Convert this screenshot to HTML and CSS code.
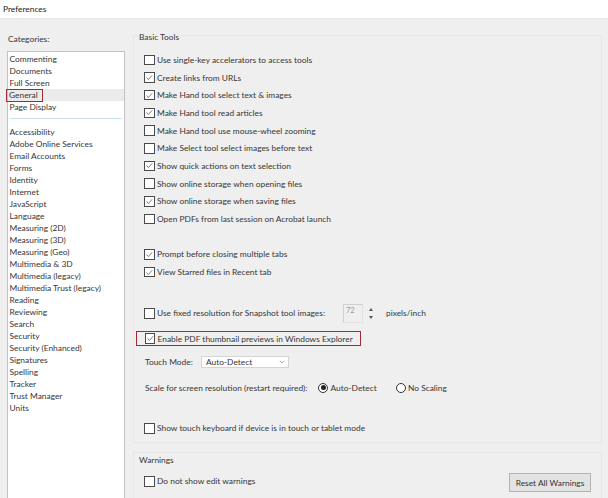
FILE: index.html
```html
<!DOCTYPE html>
<html>
<head>
<meta charset="utf-8">
<link rel="stylesheet" href="styles.css">
</head>
<body>
<div class="titlebar">Preferences</div>
<div class="main">
  <div class="sidebar">
    <div class="cat-label">Categories:</div>
    <div class="listbox">
      <div class="item">Commenting</div>
      <div class="item">Documents</div>
      <div class="item">Full Screen</div>
      <div class="item selected"><span class="mark">General</span></div>
      <div class="item">Page Display</div>
      <div class="sep"></div>
      <div class="item">Accessibility</div>
      <div class="item">Adobe Online Services</div>
      <div class="item">Email Accounts</div>
      <div class="item">Forms</div>
      <div class="item">Identity</div>
      <div class="item">Internet</div>
      <div class="item">JavaScript</div>
      <div class="item">Language</div>
      <div class="item">Measuring (2D)</div>
      <div class="item">Measuring (3D)</div>
      <div class="item">Measuring (Geo)</div>
      <div class="item">Multimedia &amp; 3D</div>
      <div class="item">Multimedia (legacy)</div>
      <div class="item">Multimedia Trust (legacy)</div>
      <div class="item">Reading</div>
      <div class="item">Reviewing</div>
      <div class="item">Search</div>
      <div class="item">Security</div>
      <div class="item">Security (Enhanced)</div>
      <div class="item">Signatures</div>
      <div class="item">Spelling</div>
      <div class="item">Tracker</div>
      <div class="item">Trust Manager</div>
      <div class="item">Units</div>
    </div>
  </div>
  <div class="content">
    <div class="group basic">
      <div class="legend">Basic Tools</div>
      <div class="rows">
        <div class="row"><span class="cb"></span>Use single-key accelerators to access tools</div>
        <div class="row"><span class="cb on"><svg viewBox="0 0 10 10"><polyline points="1.8,5 4,7.4 8.4,2.4"/></svg></span>Create links from URLs</div>
        <div class="row"><span class="cb on"><svg viewBox="0 0 10 10"><polyline points="1.8,5 4,7.4 8.4,2.4"/></svg></span>Make Hand tool select text &amp; images</div>
        <div class="row"><span class="cb on"><svg viewBox="0 0 10 10"><polyline points="1.8,5 4,7.4 8.4,2.4"/></svg></span>Make Hand tool read articles</div>
        <div class="row"><span class="cb"></span>Make Hand tool use mouse-wheel zooming</div>
        <div class="row"><span class="cb"></span>Make Select tool select images before text</div>
        <div class="row"><span class="cb on"><svg viewBox="0 0 10 10"><polyline points="1.8,5 4,7.4 8.4,2.4"/></svg></span>Show quick actions on text selection</div>
        <div class="row"><span class="cb"></span>Show online storage when opening files</div>
        <div class="row"><span class="cb on"><svg viewBox="0 0 10 10"><polyline points="1.8,5 4,7.4 8.4,2.4"/></svg></span>Show online storage when saving files</div>
        <div class="row"><span class="cb"></span>Open PDFs from last session on Acrobat launch</div>
        <div class="row spacer"></div>
        <div class="row"><span class="cb on"><svg viewBox="0 0 10 10"><polyline points="1.8,5 4,7.4 8.4,2.4"/></svg></span>Prompt before closing multiple tabs</div>
        <div class="row"><span class="cb on"><svg viewBox="0 0 10 10"><polyline points="1.8,5 4,7.4 8.4,2.4"/></svg></span>View Starred files in Recent tab</div>
        <div class="row fixed-res">
          <span class="cb"></span><span class="fr-label">Use fixed resolution for Snapshot tool images:</span>
          <span class="numbox">72</span>
          <span class="spin"><span class="up"></span><span class="down"></span></span>
          <span class="unit">pixels/inch</span>
        </div>
        <div class="row highlight"><span class="cb on"><svg viewBox="0 0 10 10"><polyline points="1.8,5 4,7.4 8.4,2.4"/></svg></span>Enable PDF thumbnail previews in Windows Explorer</div>
        <div class="row touch">
          <span class="tm-label">Touch Mode:</span>
          <span class="select">Auto-Detect<svg class="chev" viewBox="0 0 8 5"><polyline points="1,1 4,4 7,1"/></svg></span>
        </div>
        <div class="row scale">
          <span class="sc-label">Scale for screen resolution (restart required):</span>
          <span class="radio on"></span><span class="r-text">Auto-Detect</span>
          <span class="radio"></span><span class="r-text">No Scaling</span>
        </div>
        <div class="row keyboard"><span class="cb"></span>Show touch keyboard if device is in touch or tablet mode</div>
      </div>
    </div>
    <div class="group warnings">
      <div class="legend">Warnings</div>
      <div class="row warn-row"><span class="cb"></span>Do not show edit warnings<button class="btn">Reset All Warnings</button></div>
    </div>
  </div>
</div>
</body>
</html>
```
FILE: styles.css
```css
* { box-sizing: border-box; }
html, body {
  margin: 0;
  padding: 0;
  width: 608px;
  height: 498px;
  overflow: hidden;
  background: #efefef;
  font-family: Lato, "Open Sans", sans-serif;
  font-size: 8.4px;
  color: #363636;
}
.titlebar {
  height: 19px;
  background: #fff;
  border-bottom: 1px solid #e8e8e8;
  padding: 4px 0 0 3px;
  line-height: 10px;
  color: #222;
}
.main {
  display: flex;
  height: 479px;
}
.sidebar {
  width: 125px;
  padding-left: 7px;
  flex: none;
}
.cat-label {
  margin-top: 14px;
  line-height: 12px;
  height: 12px;
  padding-left: 1px;
}
.listbox {
  margin-top: 6px;
  height: 460px;
  background: #fff;
  border: 1px solid #c2c2c2;
  border-bottom: none;
  padding-top: 1px;
}
.item {
  height: 12px;
  line-height: 12px;
  padding-left: 1.5px;
  white-space: nowrap;
  color: #363636;
}
.item.selected { background: #ebebeb; }
.mark {
  display: inline-block;
  margin-left: -3.5px;
  padding: 0 4px 0 2px;
  height: 13px;
  border: 1.5px solid #a72835;
  line-height: 10.5px;
}
.sep {
  height: 1px;
  margin: 5px 2px 7px;
  background: #c9e1ef;
}
.content {
  flex: 1;
  padding: 16px 6px 0 8px;
}
.group {
  border: 1px solid #e6e6e6;
}
.legend {
  width: fit-content;
  margin: -5px 0 0 4px;
  padding: 0 1px;
  line-height: 12px;
  height: 12px;
  background: #efefef;
}
.rows {
  padding: 8px 0 5px 0;
}
.row {
  display: flex;
  align-items: center;
  height: 17.7px;
  padding-left: 10px;
  white-space: nowrap;
}
.cb {
  width: 10.5px;
  height: 10.5px;
  border: 1px solid #4a4a4a;
  background: #fff;
  margin-right: 2.5px;
  flex: none;
  display: flex;
  align-items: center;
  justify-content: center;
}
.cb svg {
  width: 9px;
  height: 9px;
  fill: none;
  stroke: #555;
  stroke-width: 0.9;
}
.fixed-res { margin-top: 23.7px; }
.fr-label { width: 186px; }
.numbox {
  width: 20px;
  height: 19px;
  border: 1px solid #cfcfcf;
  border-right-color: #e2e2e2;
  border-bottom-color: #e2e2e2;
  color: #9a9a9a;
  font-size: 7.5px;
  line-height: 10px;
  padding: 1px 0 0 2px;
  align-self: center;
}
.spin {
  width: 10px;
  margin-left: 3px;
  display: flex;
  flex-direction: column;
  align-items: center;
  gap: 5px;
}
.spin .up {
  width: 0; height: 0;
  border-left: 2.5px solid transparent;
  border-right: 2.5px solid transparent;
  border-bottom: 3px solid #555;
}
.spin .down {
  width: 0; height: 0;
  border-left: 2.5px solid transparent;
  border-right: 2.5px solid transparent;
  border-top: 3px solid #555;
}
.unit { margin-left: 10px; }
.highlight {
  margin: 8.85px 0 0 2px;
  width: 225px;
  height: 15px;
  border: 1.5px solid #a72835;
  padding-left: 7.5px;
}
.touch { margin-top: 6.85px; padding-left: 11px; }
.tm-label { width: 56px; }
.select {
  width: 88px;
  height: 12.5px;
  background: #fff;
  border: 1px solid #d4d4d4;
  display: flex;
  align-items: center;
  padding-left: 4px;
}
.chev {
  width: 6px;
  height: 4px;
  margin-left: auto;
  margin-right: 3px;
  fill: none;
  stroke: #888;
  stroke-width: 1;
}
.scale { margin-top: 8.3px; padding-left: 11px; }
.sc-label { width: 173px; }
.radio {
  width: 10px;
  height: 10px;
  border: 1px solid #333;
  border-radius: 50%;
  background: #fff;
  flex: none;
  margin-right: 2.5px;
  display: flex;
  align-items: center;
  justify-content: center;
}
.radio.on::after {
  content: "";
  width: 5px;
  height: 5px;
  border-radius: 50%;
  background: #222;
}
.r-text { width: 65px; }
.keyboard { margin-top: 22.9px; }
.warnings {
  margin-top: 9px;
  height: 60px;
  border-bottom: none;
}
.warnings .legend {
  margin-top: 1px;
  background: transparent;
}
.warn-row {
  margin-top: 5px;
  height: 20px;
}
.btn {
  margin-left: auto;
  margin-right: 10px;
  width: 82px;
  height: 19px;
  border: 1px solid #b4b4b4;
  background: #e3e3e3;
  font-family: inherit;
  font-size: 8.4px;
  color: #333;
  padding: 0;
  margin-top: 3px;
}
```
